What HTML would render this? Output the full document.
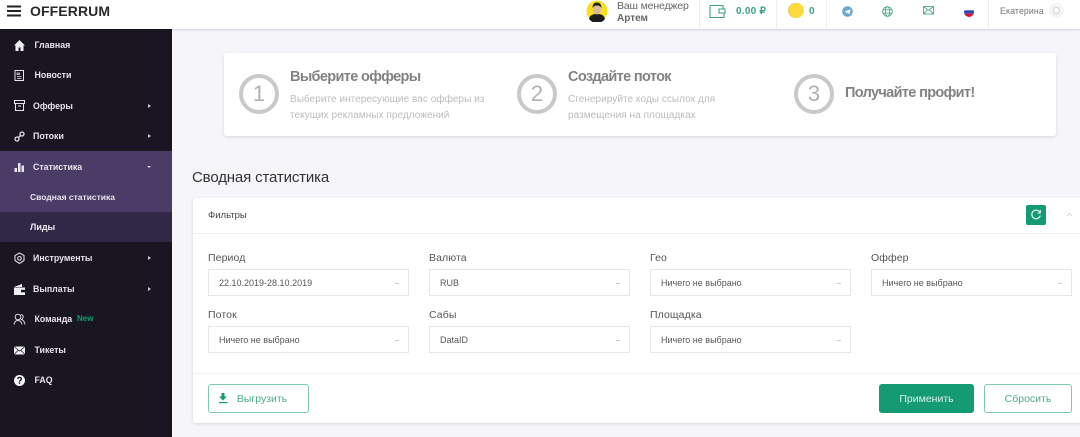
<!DOCTYPE html>
<html lang="ru"><head><meta charset="utf-8"><title>Offerrum</title>
<style>
html,body{margin:0;padding:0}
body{width:1080px;height:437px;overflow:hidden;position:relative;background:#f5f5fa;font-family:"Liberation Sans",sans-serif;color:#444}
#w{position:absolute;left:0;top:0;width:1080px;height:437px;overflow:hidden;filter:blur(.3px)}
.a,.t{position:absolute}
.t{white-space:nowrap;line-height:14px}
.top{left:0;top:0;width:1080px;height:29px;background:#fff;box-shadow:0 1px 2px rgba(0,0,0,.14)}
.side{left:0;top:29px;width:172px;height:408px;background:#191521}
.m{font-size:8.8px;font-weight:bold;color:#e6e4ea;left:33px}
.ar{position:absolute;left:148px;width:0;height:0;border-left:3px solid #c9c6d0;border-top:2.5px solid transparent;border-bottom:2.5px solid transparent}
.ic{position:absolute;left:12px;width:15px;height:15px}
.sep{position:absolute;top:0;width:1px;height:29px;background:#eee}
.card{background:#fff;border-radius:3px;box-shadow:0 1px 3px rgba(0,0,0,.13)}
.circ{position:absolute;width:32px;height:32px;border:4px solid #c9c9c9;border-radius:50%;top:74px;text-align:center;line-height:32px;font-size:22px;color:#b0b0b0}
.h{font-size:14.5px;font-weight:bold;color:#828282;letter-spacing:-.65px}
.s{font-size:10px;color:#bcbcbc;letter-spacing:.05px}
.l{font-size:10.5px;color:#555;letter-spacing:.1px}
.sel{position:absolute;width:199px;height:25px;border:1px solid #e6e6e6;font-size:9px;color:#555;line-height:26px;text-indent:10px;background:#fff}
.sel i{position:absolute;right:9px;top:13px;width:4px;height:1px;background:#ccc}
.btn{position:absolute;box-sizing:border-box;border:1px solid #7fc8b0;border-radius:3px;text-align:center;font-size:10.5px;color:#4fa98c;background:#fff}
</style></head><body><div id="w">

<div class="a side"></div>
<div class="a" style="left:0;top:151px;width:172px;height:61px;background:#4b3b67"></div>
<div class="a" style="left:0;top:212px;width:172px;height:30px;background:#302845"></div>

<div class="a top"></div>
<svg class="a" style="left:7px;top:5px" width="15" height="12" viewBox="0 0 15 12"><path d="M0 1.500h14M0 6h14M0 10.500h14" stroke="#222" stroke-width="2"/></svg>
<div class="t" style="left:30px;top:4px;font-size:14px;font-weight:bold;color:#2a2a2a;letter-spacing:.1px">OFFERRUM</div>

<svg class="a" style="left:586px;top:0" width="22" height="22" viewBox="0 0 22 22"><circle cx="11" cy="11" r="10.500" fill="#f6e11c"/><path d="M3 19c1-4 4-5 8-5s7 1 8 5a10 10 0 0 1-16 0z" fill="#1d1d1d"/><ellipse cx="11" cy="9.500" rx="4" ry="5" fill="#d9b9a0"/><path d="M6.500 8c0-4 2-5.500 4.500-5.500s4.500 1.500 4.500 5.500c-1-2-3-2.500-4.500-2.500s-3.500.5-4.500 2.500z" fill="#222"/></svg>
<div class="t" style="left:617px;top:-1px;font-size:10.500px;color:#666;letter-spacing:-.15px">Ваш менеджер</div>
<div class="t" style="left:617px;top:12px;font-size:10px;font-weight:bold;color:#666">Артем</div>
<div class="sep" style="left:699px"></div>
<svg class="a" style="left:709px;top:4px" width="17" height="15" viewBox="0 0 17 15" fill="none" stroke="#3e9f85" stroke-width="1.100"><path d="M1 1.500h13v3M1 1.500v12h14V9M15 5H10v4h6V5z"/></svg>
<div class="t" style="left:736px;top:5px;font-size:10px;font-weight:bold;color:#3e9f85;letter-spacing:.25px">0.00 ₽</div>
<div class="sep" style="left:776px"></div>
<div class="a" style="left:789px;top:3px;width:15px;height:15px;border-radius:50%;background:#fbdc3c;box-shadow:-1px 0 0 #e8c65a"></div>
<div class="t" style="left:809px;top:5px;font-size:10px;font-weight:bold;color:#3e9f85">0</div>
<div class="sep" style="left:826px"></div>
<svg class="a" style="left:842px;top:6px" width="11" height="11" viewBox="0 0 11 11"><circle cx="5.500" cy="5.500" r="5.300" fill="#6ba5d3"/><path d="M2.500 5.500l6-2.300-1 5-2-1.400-1 1-.3-1.800z" fill="#fff"/></svg>
<svg class="a" style="left:882px;top:5.500px" width="11" height="11" viewBox="0 0 11 11" fill="none" stroke="#4ea88d" stroke-width=".9"><circle cx="5.500" cy="5.500" r="4.800"/><ellipse cx="5.500" cy="5.500" rx="2.200" ry="4.800"/><path d="M1 3.800h9M1 7.200h9"/></svg>
<svg class="a" style="left:923px;top:6px" width="11" height="9" viewBox="0 0 11 9" fill="none" stroke="#4ea88d" stroke-width=".9"><rect x=".5" y=".5" width="10" height="7.500"/><path d="M.5.500l5 4 5-4M.5 8l3.500-3.500M10.500 8L7 4.500"/></svg>
<svg class="a" style="left:964px;top:7px" width="10" height="10" viewBox="0 0 10 10"><clipPath id="f"><circle cx="5" cy="5" r="5"/></clipPath><g clip-path="url(#f)"><rect width="10" height="3.300" fill="#fff"/><rect y="3.300" width="10" height="3.400" fill="#2a46b8"/><rect y="6.700" width="10" height="3.300" fill="#d8122f"/></g></svg>
<div class="sep" style="left:988px"></div>
<div class="t" style="left:1000px;top:4px;font-size:8.800px;color:#777;letter-spacing:.1px">Екатерина</div>
<div class="a" style="left:1049px;top:3px;width:15px;height:15px;border-radius:50%;background:#f4f4f4"></div>
<div class="a" style="left:1053px;top:7px;width:5px;height:5px;border:1.500px solid #d4d4d4;border-radius:50%;background:#fff"></div>

<svg class="ic" style="top:38px" viewBox="0 0 15 15"><path d="M7.500 2L2 7.500h1.500V13h3V9.500h2V13h3V7.500H13z" fill="#f0eff2"/></svg>
<div class="t m" style="top:38px;left:34.500px">Главная</div>
<svg class="ic" style="top:68px" viewBox="0 0 15 15" fill="none" stroke="#e6e4ea"><rect x="3" y="2.500" width="8.500" height="10"/><path d="M5 5h2.500v1.500H5zM5 8.500h4.500M5 10.500h4.500" stroke-width=".8"/></svg>
<div class="t m" style="top:68px;left:34.500px">Новости</div>
<svg class="ic" style="top:98px" viewBox="0 0 15 15" fill="none" stroke="#e6e4ea" stroke-width="1.100"><path d="M2.500 2.500h10v3h-10zM3.500 5.500v7h8v-7M6 8h3"/></svg>
<div class="t m" style="top:99px">Офферы</div><div class="ar" style="top:104px"></div>
<svg class="ic" style="top:129px" viewBox="0 0 15 15" fill="none" stroke="#e6e4ea" stroke-width="1.300"><circle cx="5" cy="10" r="2"/><circle cx="10" cy="5" r="2"/><path d="M6.500 8.500l2-2"/></svg>
<div class="t m" style="top:129px">Потоки</div><div class="ar" style="top:134px"></div>
<svg class="ic" style="top:159px" viewBox="0 0 15 15" fill="#e6e4ea"><rect x="2.500" y="9" width="2.500" height="4"/><rect x="6" y="4" width="2.500" height="9"/><rect x="9.500" y="6.500" width="2.500" height="6.500"/></svg>
<div class="t m" style="top:160px">Статистика</div><div class="a" style="left:147px;top:165.500px;width:0;height:0;border-top:2.500px solid #d6d2de;border-left:2.500px solid transparent;border-right:2.500px solid transparent"></div>
<div class="t m" style="top:190px;left:30px;font-size:8.500px;color:#e8e4ef">Сводная статистика</div>
<div class="t m" style="top:220px;left:30px;font-size:9px;color:#eeeaf3">Лиды</div>
<svg class="ic" style="top:251px" viewBox="0 0 15 15" fill="none" stroke="#dcdae0" stroke-width="1.100"><path d="M7.500 2l4.500 2.500v5L7.500 12.500 3 9.500v-5z" stroke-linejoin="round"/><circle cx="7.500" cy="7.300" r="1.800"/></svg>
<div class="t m" style="top:251px">Инструменты</div><div class="ar" style="top:256px"></div>
<svg class="ic" style="top:282px" viewBox="0 0 15 15" fill="#f0eff2"><path d="M2 5l8-3v3zM2 5.500h11V13H2z"/><rect x="9" y="7.800" width="4" height="2.500" fill="#191521"/></svg>
<div class="t m" style="top:282px">Выплаты</div><div class="ar" style="top:287px"></div>
<svg class="ic" style="top:312px" viewBox="0 0 15 15" fill="none" stroke="#dcdae0"><circle cx="6" cy="5" r="2.800"/><path d="M2 12.500c.5-3 2-4 4-4s3.500 1 4 4M9 2.500c1.500.3 2.200 1.300 2.200 2.500S10 7 9.500 7.500c2 .5 3 2 3.500 5"/></svg>
<div class="t m" style="top:312px;left:34.500px">Команда</div>
<div class="t" style="left:77px;top:312px;font-size:8px;font-weight:bold;color:#0fa06f">New</div>
<svg class="ic" style="top:343px" viewBox="0 0 15 15"><rect x="2" y="3.500" width="11" height="8" fill="#f0eff2"/><path d="M2 3.500l5.500 4.500 5.500-4.500M2 11.500l4-4M13 11.500l-4-4" fill="none" stroke="#191521" stroke-width=".7"/></svg>
<div class="t m" style="top:343px;left:34.500px">Тикеты</div>
<svg class="ic" style="top:373px" viewBox="0 0 15 15"><circle cx="7.500" cy="7.500" r="5.500" fill="#f4f3f6"/><path d="M5.800 6c0-2.200 3.600-2.200 3.600 0 0 1.300-1.900 1.300-1.900 2.700" fill="none" stroke="#191521" stroke-width="1.300"/><rect x="6.800" y="9.500" width="1.400" height="1.400" fill="#191521"/></svg>
<div class="t m" style="top:373px;left:34.500px">FAQ</div>

<div class="a card" style="left:224px;top:53px;width:832px;height:83px"></div>
<div class="circ" style="left:239px">1</div>
<div class="t h" style="left:290px;top:70px">Выберите офферы</div>
<div class="t s" style="left:290px;top:93px">Выберите интересующие вас офферы из</div>
<div class="t s" style="left:290px;top:109px">текущих рекламных предложений</div>
<div class="circ" style="left:517px">2</div>
<div class="t h" style="left:568px;top:70px">Создайте поток</div>
<div class="t s" style="left:568px;top:93px">Сгенерируйте коды ссылок для</div>
<div class="t s" style="left:568px;top:109px">размещения на площадках</div>
<div class="circ" style="left:794px">3</div>
<div class="t h" style="left:845px;top:86px">Получайте профит!</div>

<div class="t" style="left:192px;top:171px;font-size:15px;color:#333;letter-spacing:-.15px">Сводная статистика</div>

<div class="a card" style="left:193px;top:198px;width:900px;height:225px"></div>
<div class="t" style="left:208px;top:209px;font-size:9.500px;color:#444">Фильтры</div>
<div class="a" style="left:193px;top:233px;width:887px;height:1px;background:#f0f0f0"></div>
<div class="a" style="left:1026px;top:205px;width:20px;height:20px;background:#149b74;border-radius:2px"></div>
<svg class="a" style="left:1030px;top:209px" width="12" height="12" viewBox="0 0 12 12" fill="none" stroke="#e8f6f1" stroke-width="1.200"><path d="M10 3.500A4.300 4.300 0 1 0 10.300 6.500"/><path d="M10.300 1v3H7.500" stroke-width="1"/></svg>
<svg class="a" style="left:1066px;top:212px" width="7" height="5" viewBox="0 0 7 5" fill="none" stroke="#d5d5d5"><path d="M1 4l2.500-2.500L6 4"/></svg>

<div class="t l" style="left:208px;top:251px">Период</div>
<div class="sel" style="left:208px;top:269px">22.10.2019-28.10.2019<i></i></div>
<div class="t l" style="left:429px;top:251px">Валюта</div>
<div class="sel" style="left:429px;top:269px">RUB<i></i></div>
<div class="t l" style="left:650px;top:251px">Гео</div>
<div class="sel" style="left:650px;top:269px">Ничего не выбрано<i></i></div>
<div class="t l" style="left:871px;top:251px">Оффер</div>
<div class="sel" style="left:871px;top:269px">Ничего не выбрано<i></i></div>
<div class="t l" style="left:208px;top:308px">Поток</div>
<div class="sel" style="left:208px;top:326px">Ничего не выбрано<i></i></div>
<div class="t l" style="left:429px;top:308px">Сабы</div>
<div class="sel" style="left:429px;top:326px">DataID<i></i></div>
<div class="t l" style="left:650px;top:308px">Площадка</div>
<div class="sel" style="left:650px;top:326px">Ничего не выбрано<i></i></div>

<div class="a" style="left:193px;top:373px;width:887px;height:1px;background:#f2f2f2"></div>
<div class="btn" style="left:208px;top:384px;width:101px;height:29px;line-height:29px;text-indent:7px">Выгрузить</div>
<svg class="a" style="left:218px;top:393px" width="11" height="11" viewBox="0 0 11 11" fill="#149b74"><path d="M3.500 0h3v3.500H9L5 7.500 1 3.500h2.500z"/><rect x="1" y="9" width="8.500" height="1.200"/></svg>
<div class="btn" style="left:879px;top:384px;width:95px;height:29px;line-height:29px;background:#149b74;border-color:#149b74;color:#d9f1e9">Применить</div>
<div class="btn" style="left:984px;top:384px;width:88px;height:29px;line-height:29px">Сбросить</div>
</div></body></html>
